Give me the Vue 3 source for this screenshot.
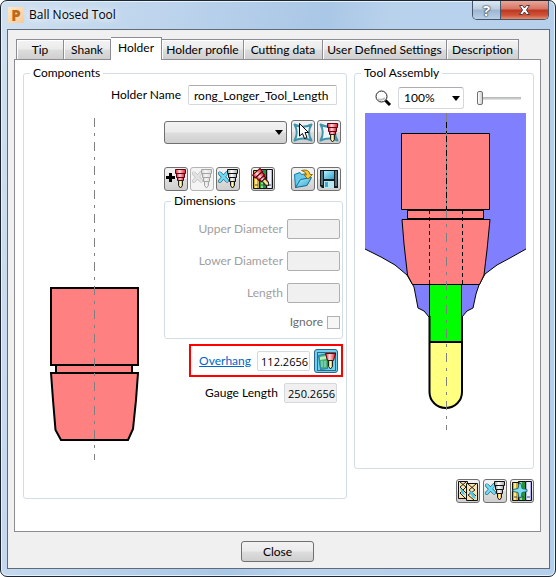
<script setup>
import { ref } from 'vue'

const tabs = ['Tip', 'Shank', 'Holder', 'Holder profile', 'Cutting data', 'User Defined Settings', 'Description']
const activeTab = ref('Holder')
const holderName = ref('rong_Longer_Tool_Length')
const overhang = ref('112.2656')
const gaugeLength = ref('250.2656')
const zoomLevel = ref('100%')
const zoomSlider = ref(0)
const dimensions = [
  { id: 'upper-diameter', label: 'Upper Diameter' },
  { id: 'lower-diameter', label: 'Lower Diameter' },
  { id: 'length', label: 'Length' },
]
</script>

<template>
  <div class="window">
    <svg class="defs" width="0" height="0" aria-hidden="true">
      <defs>
        <linearGradient id="redMetal">
          <stop offset="0" stop-color="#e0182c" />
          <stop offset="0.4" stop-color="#ffdcdc" />
          <stop offset="1" stop-color="#e0182c" />
        </linearGradient>
        <linearGradient id="greyMetal">
          <stop offset="0" stop-color="#9a9a9a" />
          <stop offset="0.4" stop-color="#ffffff" />
          <stop offset="1" stop-color="#a8a8a8" />
        </linearGradient>
        <linearGradient id="brass">
          <stop offset="0" stop-color="#e8b030" />
          <stop offset="0.5" stop-color="#fff4b0" />
          <stop offset="1" stop-color="#d89020" />
        </linearGradient>
        <linearGradient id="sky" x2="1" y2="1">
          <stop offset="0" stop-color="#b8f0fc" />
          <stop offset="1" stop-color="#2ba4cf" />
        </linearGradient>
        <symbol id="mill-red" viewBox="0 0 11 20" overflow="visible">
          <path d="M.5.5h10v4h-10z" fill="url(#redMetal)" stroke="#600010" />
          <path d="M1.500 4.500h8v4h-8z" fill="url(#redMetal)" stroke="#600010" />
          <path d="M2.500 8.500h6v3h-6z" fill="url(#redMetal)" stroke="#600010" />
          <path d="M3.500 11.500h4v5l-2 2.500-2-2.500z" fill="url(#brass)" stroke="#222" />
        </symbol>
        <symbol id="mill-grey" viewBox="0 0 11 20" overflow="visible">
          <path d="M.5.5h10v4h-10z" fill="url(#greyMetal)" stroke="#111" />
          <path d="M1.500 4.500h8v4h-8z" fill="url(#greyMetal)" stroke="#111" />
          <path d="M2.500 8.500h6v4h-6z" fill="url(#greyMetal)" stroke="#111" />
          <path d="M3.500 12.500h4v4l-2 2.500-2-2.500z" fill="url(#brass)" stroke="#111" />
        </symbol>
        <symbol id="star" viewBox="0 0 20 19" overflow="visible">
          <path d="M1.500 1.500Q10 6 18.500 1.500Q13.500 9.500 18.500 17.500Q10 13.500 1.500 17.500Q6 9.500 1.500 1.500z" fill="#eef6f6" stroke="#3f93aa" stroke-width="2" stroke-linejoin="round" />
        </symbol>
        <symbol id="cross" viewBox="0 0 12 12" overflow="visible">
          <path d="M2 2l8 8M10 1.500L2 10.500" fill="none" stroke="#14465c" stroke-width="4" stroke-linecap="round" />
          <path d="M2 2l8 8M10 1.500L2 10.500" fill="none" stroke="#6adcf6" stroke-width="3" stroke-linecap="round" />
        </symbol>
        <symbol id="binders" viewBox="0 0 20 20">
          <path d="M.5 1.500h6v18h-6z" fill="#d8ac30" stroke="#111" />
          <path d="M2 2h2v17H2z" fill="#ffe890" />
          <path d="M6.500.5h7v19h-7z" fill="#1f9838" stroke="#111" />
          <path d="M8 1h2v18H8z" fill="#90dc98" />
          <path d="M13.500.5h6v19h-6z" fill="#b4b4f0" stroke="#111" />
          <path d="M15 1h3v18h-3z" fill="#efefff" />
          <path d="M2 16h3M8 16h4M15 16h3" stroke="#444" />
        </symbol>
      </defs>
    </svg>

    <header class="titlebar">
      <span class="logo">P</span>
      <h1>Ball Nosed Tool</h1>
      <div class="caption-buttons">
        <button class="help" type="button" aria-label="Help">?</button>
        <button class="exit" type="button" aria-label="Close window">
          <svg width="13" height="12" viewBox="0 0 13 12">
            <path d="M1.500 1.500H4.500L6.500 4L8.500 1.500H11.500L8.500 6L11.500 10.500H8.500L6.500 8L4.500 10.500H1.500L4.500 6z" fill="#fff" stroke="#4e3840" stroke-linejoin="round" />
          </svg>
        </button>
      </div>
    </header>

    <main class="client">
      <div class="tabs" role="tablist">
        <button
          v-for="tab in tabs"
          :key="tab"
          type="button"
          role="tab"
          :aria-selected="tab === activeTab"
          :class="['tab', { active: tab === activeTab }]"
          @click="activeTab = tab"
        >{{ tab }}</button>
      </div>

      <section class="panel" role="tabpanel">
        <fieldset class="group components">
          <legend>Components</legend>
          <div class="name-row">
            <label for="holder-name">Holder Name</label>
            <input id="holder-name" v-model="holderName" class="field wide" type="text">
          </div>
          <div class="holder-body">
            <div class="holder-view">
              <svg viewBox="24 112 140 350" width="140" height="350" role="img" aria-label="Holder components">
                <g fill="#ff8080" stroke="#000" stroke-width="2">
                  <path d="M56 364h76v11H56z" />
                  <path d="M51 288h87v77H51z" />
                  <path d="M51 373H138L136 400L133 429L128 440H61L55.500 430L53 400z" />
                </g>
                <path d="M94.500 118V460" stroke="#808080" stroke-dasharray="9 6 3 6" />
              </svg>
            </div>

            <div class="controls">
              <div class="button-row">
                <span class="select-wrap holder-select">
                  <select class="raised" aria-label="Holder component"><option></option></select>
                  <svg class="arrow" width="8" height="5" viewBox="0 0 8 5"><path d="M0 0h8L4 5z" /></svg>
                </span>
                <div class="button-set">
                  <button class="tool" type="button" aria-label="Pick holder">
                    <svg viewBox="1 1 22 22">
                      <use href="#star" x="2" y="3" width="20" height="19" />
                      <path d="M8.500 3.500V16L11.500 13.500L13.500 18.500L16 17.500L14 12.500H17.500z" fill="#fff" stroke="#000" />
                    </svg>
                  </button>
                  <button class="tool" type="button" aria-label="Pick tool holder">
                    <svg viewBox="1 1 22 22">
                      <use href="#star" x="2" y="3" width="20" height="19" />
                      <use href="#mill-red" x="10" y="3" width="11" height="20" />
                    </svg>
                  </button>
                </div>
              </div>

              <div class="button-row second">
                <div class="button-set">
                  <button class="tool" type="button" aria-label="Add component">
                    <svg viewBox="1 1 22 22">
                      <path d="M2 10.500h9M6.500 6v9" stroke="#000" stroke-width="3" />
                      <use href="#mill-red" x="11" y="2" width="11" height="20" />
                    </svg>
                  </button>
                  <button class="tool" type="button" aria-label="Remove component" disabled>
                    <svg viewBox="1 1 22 22">
                      <use href="#cross" x="2" y="4" width="11" height="12" />
                      <use href="#mill-grey" x="11" y="2" width="11" height="20" />
                    </svg>
                  </button>
                  <button class="tool" type="button" aria-label="Clear holder">
                    <svg viewBox="1 1 22 22">
                      <use href="#cross" x="2" y="4" width="11" height="12" />
                      <use href="#mill-grey" x="11" y="2" width="11" height="20" />
                    </svg>
                  </button>
                </div>
                <button class="tool library" type="button" aria-label="Holder library">
                  <svg viewBox="1 1 22 22">
                    <use href="#binders" x="2" y="2" width="20" height="20" />
                    <g transform="rotate(-42 8 7)"><use href="#mill-red" x="2" y="3" width="11" height="20" /></g>
                  </svg>
                </button>
                <div class="button-set last">
                  <button class="tool" type="button" aria-label="Open holder">
                    <svg viewBox="1 1 22 22">
                      <path d="M4.500 20.500L3.500 7.500L9 5.500L10.500 7.500L16.500 6.500V13z" fill="#6cc8e8" stroke="#1478a0" />
                      <path d="M4.500 20.500L9.500 12.500L20.500 10.500L16 18.500z" fill="url(#sky)" stroke="#0c6c98" />
                      <path d="M10.500 3.500Q18 1.500 19 7.500H21.500L17 12L13 8H15.500Q15 4.500 10.500 3.500z" fill="#f6c838" stroke="#94700c" />
                    </svg>
                  </button>
                  <button class="tool" type="button" aria-label="Save holder">
                    <svg viewBox="1 1 22 22">
                      <path d="M3 3h18v18H5l-2-2z" fill="#151c20" />
                      <path d="M4 4h2v14H4zM18 4h2v15h-2z" fill="#5a7078" />
                      <path d="M7 4h10v8H7z" fill="url(#sky)" />
                      <path d="M7 14h10v7H7z" fill="#b8e8f4" />
                      <path d="M8 15h3v5H8z" fill="#4aa8c4" />
                    </svg>
                  </button>
                </div>
              </div>

              <fieldset class="group dimensions">
                <legend>Dimensions</legend>
                <div v-for="item in dimensions" :key="item.id" class="dimension">
                  <label :for="item.id">{{ item.label }}</label>
                  <input :id="item.id" class="field" type="text" disabled>
                </div>
                <div class="dimension ignore">
                  <label for="ignore">Ignore</label>
                  <input id="ignore" class="check" type="checkbox" disabled>
                </div>
              </fieldset>

              <div class="overhang">
                <a href="#overhang">Overhang</a>
                <input v-model="overhang" class="field number" type="text" aria-label="Overhang">
                <button class="tool focused" type="button" aria-label="Calculate overhang">
                  <svg viewBox="1 1 22 22">
                    <path d="M4.500 6.500L13.500 4.500V19.500L6.500 20.500z" fill="#48b070" stroke="#2878b0" />
                    <path d="M6 8l6-1v3l-6 1z" fill="#b8f0c0" />
                    <path d="M7 13h6M7 15h6M7 17h6" stroke="#a0e8f0" stroke-dasharray="2 1" />
                    <path d="M11.500 4.500h10l-2 7h-6z" fill="url(#redMetal)" stroke="#700" />
                    <path d="M14.500 11.500h4v6l-2 2.500-2-2.500z" fill="url(#brass)" stroke="#222" />
                    <path d="M3.500 3.500h18v18h-18z" fill="none" stroke="#000" stroke-dasharray="1 1" />
                  </svg>
                </button>
              </div>

              <div class="gauge">
                <label for="gauge">Gauge Length</label>
                <input id="gauge" :value="gaugeLength" class="field number" type="text" readonly>
              </div>
            </div>
          </div>
        </fieldset>

        <div class="side">
          <fieldset class="group assembly">
            <legend>Tool Assembly</legend>
            <div class="zoom-row">
              <svg width="17" height="17" viewBox="0 0 17 17" aria-hidden="true">
                <circle cx="6.500" cy="6.500" r="5.500" fill="#fdfdfd" stroke="#222" />
                <path d="M3 9q3 2 7-1" fill="none" stroke="#c0c0c0" stroke-width="2" />
                <path d="M10.500 10.500L15 15" stroke="#000" stroke-width="3" />
              </svg>
              <span class="select-wrap zoom-select">
                <select v-model="zoomLevel" class="flat" aria-label="Zoom"><option>100%</option></select>
                <svg class="arrow" width="8" height="5" viewBox="0 0 8 5"><path d="M0 0h8L4 5z" /></svg>
              </span>
              <input v-model="zoomSlider" class="slider" type="range" min="0" max="100" aria-label="Zoom amount">
            </div>
            <svg class="assembly-view" viewBox="365 113 161 318" width="161" height="318" role="img" aria-label="Tool assembly">
              <path d="M365 113H526V249L510 258L497 265L485 274L479 285L476 294L473 308L467 311L462 317H429L424 311L418 308L414 287L407 275L395 265L381 257L365 249z" fill="#8080ff" />
              <path d="M365 249L381 257L395 265L407 275L414 287L418 308L424 311L429 317M526 249L510 258L497 265L485 274L479 285L476 294L473 308L467 311L462 317" fill="none" stroke="#000" />
              <g fill="#ff8080" stroke="#000">
                <path d="M401.500 133.500h88v76h-88z" />
                <path d="M407.500 210.500h76v8h-76z" />
                <path d="M402 219.500H490L487 250L484 275L479.500 284.500H412.500L407.500 275L404 244z" />
              </g>
              <path d="M407 210H484M407 218.500H484" stroke="#000" />
              <path d="M429.500 210V284M462.500 210V284" stroke="#000" stroke-dasharray="4 3" />
              <path d="M430 285h32v57h-32z" fill="#0f0" />
              <path d="M430 342h32v50a16 16 0 0 1-32 0z" fill="#ffff80" />
              <path d="M429.500 285V342M461.500 285V342" stroke="#000" />
              <path d="M429.500 316V392a16 16 0 0 0 16 16h.5a16 16 0 0 0 16-16V316M429 342H462" fill="none" stroke="#000" stroke-width="2" />
              <path d="M446.500 113V218" stroke="#808080" />
              <path d="M446.500 122V210" stroke="#000" stroke-dasharray="6 3 2 3" />
              <path d="M446.500 224V430" stroke="#808080" stroke-dasharray="3 6 9 6" />
            </svg>
          </fieldset>
          <div class="side-buttons">
            <button class="tool" type="button" aria-label="Copy tool">
              <svg viewBox="1 1 22 22">
                <path d="M2.500 2.500h9v17h-9z" fill="#fbe3ae" stroke="#111" />
                <path d="M4 3l6 5-6 6 5 5M10 3L4 8l6 6" fill="none" stroke="#222" />
                <path d="M4 9l3 2 2 5-3-1z" fill="#48c8ea" />
                <path d="M10.500 4.500h11v17h-11z" fill="#fbe3ae" stroke="#111" />
                <path d="M12 5l7 6-7 5 6 5M20 5l-7 6 7 6" fill="none" stroke="#222" />
                <path d="M13 13l3-1 4 8-3-1z" fill="#48c8ea" />
              </svg>
            </button>
            <button class="tool" type="button" aria-label="Delete tool">
              <svg viewBox="1 1 22 22">
                <use href="#cross" x="2" y="4" width="11" height="12" />
                <use href="#mill-grey" x="11" y="2" width="11" height="20" />
              </svg>
            </button>
            <button class="tool" type="button" aria-label="Add tool to library">
              <svg viewBox="1 1 22 22">
                <use href="#binders" x="2" y="2" width="20" height="20" />
                <path d="M9 4.500h2l1 5 5 1v2l-5 1-1 5H9l-1-5-5-1v-2l5-1z" fill="#7ce0ee" stroke="#2c6c78" />
              </svg>
            </button>
          </div>
        </div>
      </section>

      <footer class="footer">
        <button class="close" type="button">Close</button>
      </footer>
    </main>
  </div>
</template>

<style>
body {
  margin: 0;
  background: #fff;
}
</style>

<style scoped>
* {
  box-sizing: border-box;
}
.window {
  min-height: 100vh;
  display: flex;
  flex-direction: column;
  padding: 0 5px 7px 6px;
  border: 1px solid #1c2530;
  border-radius: 7px;
  background: linear-gradient(100deg, #cfe0f0 0, #bdd4ec 25%, #a9c7e6 50%, #b9d2ec 60%, #b4cfeb 100%);
  box-shadow: inset 0 0 0 1px #e4f2fc;
  font: 12px/16px Lato, "Open Sans", sans-serif;
  color: #000;
}
.defs {
  position: absolute;
}
button,
input,
select {
  font: inherit;
  color: inherit;
  margin: 0;
}
.titlebar {
  display: flex;
  align-items: flex-start;
  height: 28px;
  padding: 0 1px;
}
.logo {
  width: 16px;
  height: 16px;
  margin-top: 6px;
  background: linear-gradient(135deg, #ffe9cc, #f9c994);
  color: #bd6a1d;
  font: 800 15px/16px "Open Sans", sans-serif;
  text-align: center;
}
h1 {
  margin: 6px 0 0 5px;
  font: 12px/16px "Open Sans", sans-serif;
  text-shadow: 0 0 6px #fff, 0 0 10px #fff;
}
.caption-buttons {
  display: flex;
  margin-left: auto;
  border: 1px solid #46566a;
  border-top: 0;
  border-radius: 0 0 5px 5px;
  overflow: hidden;
}
.caption-buttons button {
  display: grid;
  place-items: center;
  height: 18px;
  padding: 0;
  border: 0;
}
.caption-buttons .help {
  width: 28px;
  border-right: 1px solid #46566a;
  background: linear-gradient(#dbe7f3 0, #bccde0 45%, #9db5cf 50%, #b9d0e8 100%);
  color: #fff;
  font: bold 15px/16px "Open Sans", sans-serif;
  text-shadow: 0 0 1px #303848, 0 0 2px #303848, 0 0 1px #303848;
}
.caption-buttons .exit {
  width: 47px;
  background: linear-gradient(#e9a698 0, #d67464 45%, #bd3620 50%, #d0553a 80%, #e89070 100%);
}
.client {
  flex: 1;
  display: flex;
  flex-direction: column;
  padding: 7px 8px 6px 6px;
  border: 1px solid #5f6b78;
  background: #f0f0f0;
}
.tabs {
  display: grid;
  grid-template-columns: 48px 47px 51px 82px 79px 124px 72px;
  align-items: end;
  padding-left: 2px;
}
.tab {
  height: 20px;
  padding: 0;
  border: 1px solid #8c8c94;
  border-width: 1px 1px 0;
  background: linear-gradient(#f3f3f3 0, #ebebeb 48%, #dddddd 52%, #cfcfcf 100%);
  box-shadow: inset 1px 1px #fff;
  white-space: nowrap;
}
.tab + .tab {
  border-left-width: 0;
}
.tab.active {
  height: 23px;
  margin-bottom: -1px;
  padding-bottom: 3px;
  background: #fff;
  position: relative;
}
.panel {
  flex: 1;
  display: flex;
  gap: 7px;
  padding: 5px 6px 28px 8px;
  border: 1px solid #8c8c94;
  background: #fff;
}
.group {
  min-width: 0;
  margin: 0;
  border: 1px solid #d3dde6;
  border-radius: 3px;
}
legend {
  height: 16px;
  margin-left: 6px;
  padding: 0 3px;
}
.components {
  flex: 1;
  margin-bottom: 4px;
  padding: 4px 3px 3px 0;
}
.name-row {
  display: flex;
  justify-content: flex-end;
  align-items: center;
  gap: 7px;
  padding-right: 6px;
  margin-bottom: 7px;
}
.field {
  width: 53px;
  height: 20px;
  padding: 0 5px;
  border: 1px solid #d5d8dc;
  border-top-color: #abadb3;
  border-radius: 2px;
  background: #fff;
}
.field.wide {
  width: 149px;
}
.field.number {
  padding: 0 1px;
  border-top-color: #d5d8dc;
  font: 11px/16px "Open Sans", sans-serif;
  text-align: right;
}
.field:read-only {
  background: #f0f0f0;
}
.field:disabled {
  border-color: #afafaf;
  background: #f0f0f0;
}
.holder-body {
  display: flex;
}
.holder-view {
  flex: 1;
}
.holder-view svg {
  display: block;
}
.controls {
  flex: 0 0 179px;
  padding-top: 8px;
}
.button-row {
  display: flex;
  gap: 4px;
  padding-right: 2px;
}
.button-row.second {
  gap: 0;
  margin: 23px 0 2px;
}
.button-set {
  display: flex;
  gap: 2px;
}
.library {
  margin-left: 11px;
}
.button-set.last {
  margin-left: auto;
}
.tool {
  flex: none;
  width: 24px;
  height: 24px;
  padding: 0;
  border: 1px solid #707070;
  border-radius: 3px;
  background: linear-gradient(#f2f2f2 0, #ebebeb 48%, #dddddd 52%, #cfcfcf 100%);
}
.tool svg {
  display: block;
  width: 22px;
  height: 22px;
}
.tool:disabled {
  border-color: #b4b4b4;
  background: #f4f4f4;
}
.tool:disabled svg {
  filter: grayscale(1);
  opacity: 0.35;
}
.tool.focused {
  border-color: #2c628b;
  background: #6fd0f0;
}
.select-wrap {
  display: grid;
  align-items: center;
}
.select-wrap > * {
  grid-area: 1 / 1;
}
.holder-select {
  flex: 1;
}
select {
  appearance: none;
  width: 100%;
  height: 22px;
  padding: 0 5px;
  border-radius: 3px;
}
.raised {
  height: 23px;
  border: 1px solid #707070;
  background: linear-gradient(#f2f2f2 0, #ebebeb 48%, #dddddd 52%, #cfcfcf 100%);
}
.flat {
  border: 1px solid #d5d8dc;
  border-top-color: #abadb3;
  background: #fff;
}
.arrow {
  justify-self: end;
  margin-right: 4px;
  pointer-events: none;
}
.dimensions {
  display: flex;
  flex-direction: column;
  gap: 12px;
  padding: 10px 2px 9px 0;
}
.dimension {
  display: flex;
  justify-content: flex-end;
  align-items: center;
  gap: 4px;
  color: #a0a0a0;
}
.ignore {
  height: 14px;
  color: #6d6d6d;
}
.check {
  appearance: none;
  width: 13px;
  height: 13px;
  border: 1px solid #b1b1b1;
  background: #f6f6f6;
}
.overhang {
  display: flex;
  justify-content: flex-end;
  align-items: center;
  margin: 5px 0 0 25px;
  padding: 3px 3px 2px;
  border: 2px solid #f00;
}
.overhang a {
  margin-right: 6px;
  color: #0066cc;
}
.overhang .tool {
  margin-left: 4px;
}
.gauge {
  display: flex;
  justify-content: flex-end;
  align-items: center;
  gap: 6px;
  margin-top: 6px;
  padding-right: 6px;
}
.side {
  flex: none;
  display: flex;
  flex-direction: column;
  gap: 10px;
}
.assembly {
  flex: 1;
  padding: 6px 7px 0 0;
}
.zoom-row {
  display: flex;
  align-items: center;
  padding-left: 20px;
  margin-bottom: 4px;
}
.zoom-select {
  width: 66px;
  margin: 0 13px 0 6px;
}
.slider {
  appearance: none;
  width: 44px;
  height: 14px;
  background: linear-gradient(#b0b0b0, #e4e8e8) center / 100% 3px no-repeat;
}
.slider::-webkit-slider-thumb {
  appearance: none;
  width: 6px;
  height: 14px;
  border: 1px solid #707070;
  border-radius: 2px;
  background: linear-gradient(90deg, #fff, #d0d0d0);
}
.assembly-view {
  display: block;
  margin-left: 10px;
}
.side-buttons {
  display: flex;
  justify-content: flex-end;
  gap: 3px;
}
.footer {
  display: flex;
  justify-content: center;
  padding: 9px 0 0;
}
.close {
  width: 73px;
  height: 21px;
  padding: 0;
  border: 1px solid #707070;
  border-radius: 3px;
  background: linear-gradient(#f2f2f2 0, #ebebeb 48%, #dddddd 52%, #cfcfcf 100%);
}
</style>
